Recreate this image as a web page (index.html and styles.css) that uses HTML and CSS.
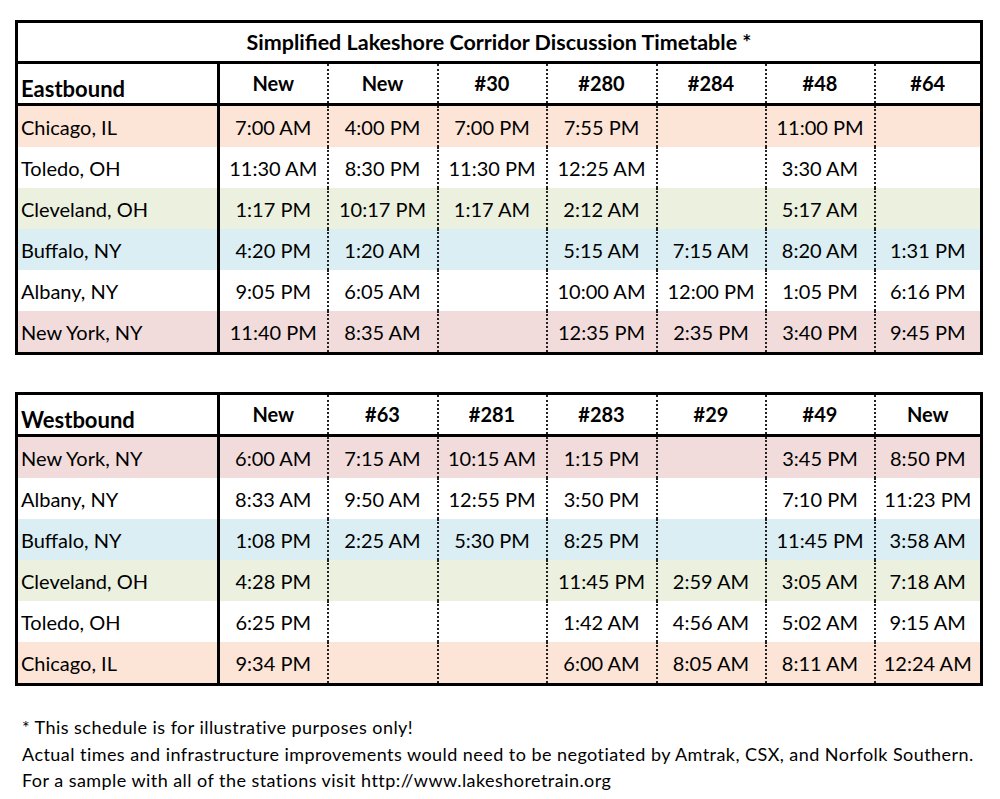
FILE: index.html
```html
<!DOCTYPE html>
<html>
<head>
<meta charset="utf-8">
<link rel="stylesheet" href="styles.css">
</head>
<body>
<div class="page">
  <table class="tt tt-east">
    <colgroup>
      <col class="c-st"><col class="c1"><col class="c2"><col class="c3"><col class="c4"><col class="c5"><col class="c6"><col class="c7">
    </colgroup>
    <tr class="title-row"><th colspan="8" class="title">Simplified Lakeshore Corridor Discussion Timetable *</th></tr>
    <tr class="head-row">
      <th class="dir">Eastbound</th><th>New</th><th>New</th><th>#30</th><th>#280</th><th>#284</th><th>#48</th><th>#64</th>
    </tr>
    <tr class="peach"><td class="st">Chicago, IL</td><td>7:00 AM</td><td>4:00 PM</td><td>7:00 PM</td><td>7:55 PM</td><td></td><td>11:00 PM</td><td></td></tr>
    <tr class="white"><td class="st">Toledo, OH</td><td>11:30 AM</td><td>8:30 PM</td><td>11:30 PM</td><td>12:25 AM</td><td></td><td>3:30 AM</td><td></td></tr>
    <tr class="green"><td class="st">Cleveland, OH</td><td>1:17 PM</td><td>10:17 PM</td><td>1:17 AM</td><td>2:12 AM</td><td></td><td>5:17 AM</td><td></td></tr>
    <tr class="blue"><td class="st">Buffalo, NY</td><td>4:20 PM</td><td>1:20 AM</td><td></td><td>5:15 AM</td><td>7:15 AM</td><td>8:20 AM</td><td>1:31 PM</td></tr>
    <tr class="white"><td class="st">Albany, NY</td><td>9:05 PM</td><td>6:05 AM</td><td></td><td>10:00 AM</td><td>12:00 PM</td><td>1:05 PM</td><td>6:16 PM</td></tr>
    <tr class="pink"><td class="st">New York, NY</td><td>11:40 PM</td><td>8:35 AM</td><td></td><td>12:35 PM</td><td>2:35 PM</td><td>3:40 PM</td><td>9:45 PM</td></tr>
  </table>

  <table class="tt tt-west">
    <colgroup>
      <col class="c-st"><col class="c1"><col class="c2"><col class="c3"><col class="c4"><col class="c5"><col class="c6"><col class="c7">
    </colgroup>
    <tr class="head-row head-first">
      <th class="dir">Westbound</th><th>New</th><th>#63</th><th>#281</th><th>#283</th><th>#29</th><th>#49</th><th>New</th>
    </tr>
    <tr class="pink"><td class="st">New York, NY</td><td>6:00 AM</td><td>7:15 AM</td><td>10:15 AM</td><td>1:15 PM</td><td></td><td>3:45 PM</td><td>8:50 PM</td></tr>
    <tr class="white"><td class="st">Albany, NY</td><td>8:33 AM</td><td>9:50 AM</td><td>12:55 PM</td><td>3:50 PM</td><td></td><td>7:10 PM</td><td>11:23 PM</td></tr>
    <tr class="blue"><td class="st">Buffalo, NY</td><td>1:08 PM</td><td>2:25 AM</td><td>5:30 PM</td><td>8:25 PM</td><td></td><td>11:45 PM</td><td>3:58 AM</td></tr>
    <tr class="green"><td class="st">Cleveland, OH</td><td>4:28 PM</td><td></td><td></td><td>11:45 PM</td><td>2:59 AM</td><td>3:05 AM</td><td>7:18 AM</td></tr>
    <tr class="white"><td class="st">Toledo, OH</td><td>6:25 PM</td><td></td><td></td><td>1:42 AM</td><td>4:56 AM</td><td>5:02 AM</td><td>9:15 AM</td></tr>
    <tr class="peach"><td class="st">Chicago, IL</td><td>9:34 PM</td><td></td><td></td><td>6:00 AM</td><td>8:05 AM</td><td>8:11 AM</td><td>12:24 AM</td></tr>
  </table>

  <div class="notes">
    <p>* This schedule is for illustrative purposes only!</p>
    <p>Actual times and infrastructure improvements would need to be negotiated by Amtrak, CSX, and Norfolk Southern.</p>
    <p>For a sample with all of the stations visit http://www.lakeshoretrain.org</p>
  </div>
</div>
</body>
</html>
```

FILE: styles.css
```css
html, body {
  margin: 0;
  padding: 0;
  background: #ffffff;
}

body {
  font-family: Lato, "Open Sans", "Liberation Sans", sans-serif;
  color: #000000;
}

.page {
  padding: 20px 0 0 15px;
  width: 968px;
}

.tt {
  border-collapse: collapse;
  table-layout: fixed;
  width: 965px;
  border: 3px solid #000;
}

.tt-west {
  margin-top: 37px;
}

.c-st { width: 202px; }
.c1 { width: 109px; }
.c2 { width: 110px; }
.c3 { width: 109px; }
.c4 { width: 110px; }
.c5 { width: 109px; }
.c6 { width: 109px; }
.c7 { width: 107px; }

.tt th,
.tt td {
  padding: 0;
  text-align: center;
  vertical-align: middle;
  font-size: 20px;
  white-space: nowrap;
  border-left: 2px dotted #222;
}

.tt th {
  font-weight: 700;
}

.title-row th.title {
  height: 38px;
  font-size: 21.5px;
  border-bottom: 3px solid #000;
  border-left: none;
  padding-top: 0;
}

.head-row th {
  height: 37px;
  border-bottom: 3px solid #000;
  padding-bottom: 2px;
}

.head-first th {
  height: 37px;
}

.head-row th.dir,
.tt td.st {
  text-align: left;
  border-left: none;
  border-right: 3px solid #000;
  padding-left: 3px;
}

.head-row th.dir {
  vertical-align: bottom;
  font-size: 22px;
  padding-bottom: 1px;
}

.tt td {
  height: 41px;
  font-weight: 400;
}

.peach td { background: #fce4d6; }
.green td { background: #ebf1de; }
.blue td { background: #daeef3; }
.pink td { background: #f2dcdb; }
.white td { background: #ffffff; }

.notes {
  margin-top: 28px;
  padding-left: 7px;
  font-size: 18px;
  letter-spacing: 0.45px;
  line-height: 26.5px;
}

.notes p {
  margin: 0;
}
```
